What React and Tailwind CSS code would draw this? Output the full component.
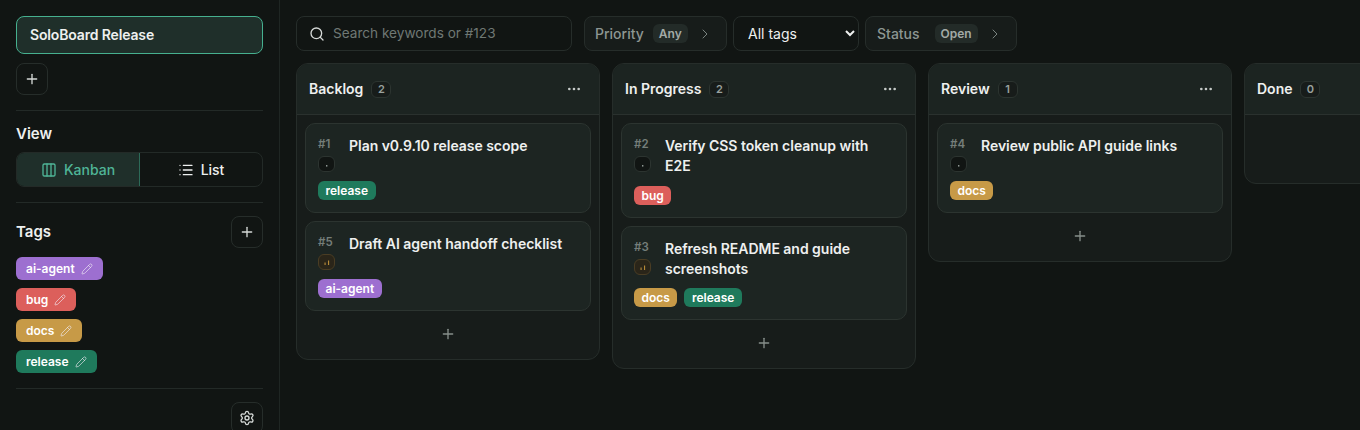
import React from "react";
import { ChevronRight, Columns3, Ellipsis, List, Pencil, Plus, Search, Settings } from "lucide-react";

const tagColors = {
  "ai-agent": "bg-[#9d6fd0]",
  bug: "bg-[#dc5f5b]",
  docs: "bg-[#c79a47]",
  release: "bg-[#1f7a5c]",
};

const columns = [
  {
    name: "Backlog",
    cards: [
      { id: 1, title: "Plan v0.9.10 release scope", priority: "none", tags: ["release"] },
      { id: 5, title: "Draft AI agent handoff checklist", priority: "medium", tags: ["ai-agent"] },
    ],
  },
  {
    name: "In Progress",
    cards: [
      { id: 2, title: "Verify CSS token cleanup with E2E", priority: "none", tags: ["bug"] },
      { id: 3, title: "Refresh README and guide screenshots", priority: "medium", tags: ["docs", "release"] },
    ],
  },
  {
    name: "Review",
    cards: [{ id: 4, title: "Review public API guide links", priority: "none", tags: ["docs"] }],
  },
  { name: "Done", cards: [] },
];

function SquareButton({ children }) {
  return (
    <button className="flex h-8 w-8 shrink-0 items-center justify-center rounded-lg border border-[#262d2a] text-[#d5d9d7]">
      {children}
    </button>
  );
}

function PriorityIcon({ level }) {
  if (level === "medium") {
    return (
      <div className="flex h-4 w-[17px] items-center justify-center rounded-md border border-[#4a3d24] bg-[#2a2519]">
        <svg width="8" height="8" viewBox="0 0 8 8">
          <rect x="1.6" y="4.5" width="0.9" height="2.5" fill="#d9a441" />
          <rect x="5.2" y="2.5" width="0.9" height="4.5" fill="#d9a441" />
        </svg>
      </div>
    );
  }
  return (
    <div className="flex h-4 w-[17px] items-center justify-center rounded-md border border-[#2c3430] bg-[#111513]">
      <svg width="8" height="8" viewBox="0 0 8 8">
        <rect x="3" y="5" width="1.4" height="1.6" fill="#8d9692" />
      </svg>
    </div>
  );
}

function TaskCard({ card }) {
  return (
    <div className="rounded-[10px] border border-[#2c3430] bg-[#1d2522] p-3">
      <div className="flex gap-2">
        <div className="w-[23px] shrink-0">
          <div className="mb-1 h-4 text-[11.5px] font-semibold leading-4 text-[#757e7a]">#{card.id}</div>
          <PriorityIcon level={card.priority} />
        </div>
        <div className="text-sm font-semibold leading-[20.25px] tracking-[-0.03px] text-[#eef0ef]">{card.title}</div>
      </div>
      <div className="mt-[9px] flex gap-[7px]">
        {card.tags.map((tag) => (
          <span
            key={tag}
            className={`h-[19px] rounded-md px-[7.5px] text-xs font-semibold leading-[19px] text-white ${tagColors[tag]}`}
          >
            {tag}
          </span>
        ))}
      </div>
    </div>
  );
}

function Column({ column }) {
  return (
    <section className="w-[304px] shrink-0 self-start overflow-hidden rounded-xl border border-[#262d2a] bg-[#171c1a]">
      <header className="flex h-[51px] items-center justify-between border-b border-[#2a312e] bg-[#1c2421] pl-3 pr-[17px]">
        <div className="flex items-center gap-2">
          <h3 className="text-sm font-semibold text-[#eef0ef]">{column.name}</h3>
          <span className="flex h-[17px] w-5 items-center justify-center rounded-md border border-[#2c3430] bg-[#171c1a] text-[11px] font-semibold text-[#9aa29e]">
            {column.cards.length}
          </span>
        </div>
        {column.cards.length > 0 && <Ellipsis size={16} className="text-[#c5cac8]" />}
      </header>
      {column.cards.length > 0 ? (
        <div className="flex flex-col gap-2 px-2 pb-[11px] pt-2">
          {column.cards.map((card) => (
            <TaskCard key={card.id} card={card} />
          ))}
          <button className="flex h-[29px] items-center justify-center text-[#878f8b]">
            <Plus size={16} />
          </button>
        </div>
      ) : (
        <div className="h-[68px]" />
      )}
    </section>
  );
}

function FilterPill({ label, value, className, badgeClass }) {
  return (
    <button className={`flex h-[35px] items-center rounded-lg border border-[#262d2a] bg-[#171c1a] ${className}`}>
      <span className="text-sm font-medium text-[#8d9692]">{label}</span>
      <span className={`flex h-[19px] items-center rounded-md bg-[#232b28] px-[6px] text-xs font-semibold text-[#a2aaa6] ${badgeClass}`}>
        {value}
      </span>
      <ChevronRight size={16} strokeWidth={1.5} className="ml-[9px] text-[#7b8480]" />
    </button>
  );
}

export default function App() {
  return (
    <div className="flex h-[430px] w-[1360px] overflow-hidden bg-[#111513] font-['Inter',sans-serif]">
      <aside className="flex w-[280px] shrink-0 flex-col border-r border-[#1f2623] px-4 pt-4 [&>*]:shrink-0">
        <button className="h-[38px] w-full rounded-lg border border-[#46b08f] bg-[#1f2f2a] px-[13px] text-left text-sm font-semibold tracking-[-0.15px] text-[#eef0ef]">
          SoloBoard Release
        </button>
        <div className="mt-[9px]">
          <SquareButton>
            <Plus size={16} />
          </SquareButton>
        </div>
        <div className="mt-[15px] border-t border-[#232a27]" />
        <h2 className="mt-[13px] text-[15px] font-semibold leading-5 text-[#eef0ef]">View</h2>
        <div className="mt-2 flex h-[35px] overflow-hidden rounded-lg border border-[#232a27]">
          <button className="flex flex-1 items-center justify-center gap-[7px] border-r border-[#2d6a58] bg-[#1f2f2a] text-sm font-medium text-[#4fb597]">
            <Columns3 size={16} />
            Kanban
          </button>
          <button className="flex flex-1 items-center justify-center gap-[7px] text-sm font-medium text-[#eef0ef]">
            <List size={16} />
            List
          </button>
        </div>
        <div className="mt-[15px] border-t border-[#232a27]" />
        <div className="mt-[13px] flex items-center justify-between">
          <h2 className="text-[15px] font-semibold text-[#eef0ef]">Tags</h2>
          <SquareButton>
            <Plus size={16} />
          </SquareButton>
        </div>
        <div className="mt-[9px] flex flex-col items-start gap-2">
          {Object.keys(tagColors).map((tag) => (
            <span
              key={tag}
              className={`flex h-[23px] items-center gap-[6px] rounded-md pl-[10px] pr-[10px] text-xs font-semibold text-white ${tagColors[tag]}`}
            >
              {tag}
              <Pencil size={12} strokeWidth={1.25} className="text-[#f2eef5]" />
            </span>
          ))}
        </div>
        <div className="mt-[15px] border-t border-[#232a27]" />
        <div className="mt-[13px] flex justify-end">
          <SquareButton>
            <Settings size={16} />
          </SquareButton>
        </div>
      </aside>
      <main className="min-w-0 flex-1 px-4 pt-4">
        <div className="flex items-center">
          <div className="flex h-[35px] w-[276px] items-center gap-[8px] rounded-lg border border-[#262d2a] bg-[#111513] px-[12px]">
            <Search size={16} className="shrink-0 text-[#d5d9d7]" />
            <input
              placeholder="Search keywords or #123"
              className="w-full bg-transparent text-[13.6px] text-[#d5d9d7] outline-none placeholder:text-[#6f7874]"
            />
          </div>
          <FilterPill label="Priority" value="Any" className="ml-3 w-[143px] pl-[10px]" badgeClass="ml-[9px]" />
          <select className="ml-[6px] h-[35px] w-[126px] rounded-lg border border-[#262d2a] bg-[#111513] pl-[10px] text-sm text-[#eef0ef]">
            <option>All tags</option>
          </select>
          <FilterPill label="Status" value="Open" className="ml-[6px] w-[152px] pl-[11px]" badgeClass="ml-[15px]" />
        </div>
        <div className="mt-3 flex gap-3">
          {columns.map((column) => (
            <Column key={column.name} column={column} />
          ))}
        </div>
      </main>
    </div>
  );
}
